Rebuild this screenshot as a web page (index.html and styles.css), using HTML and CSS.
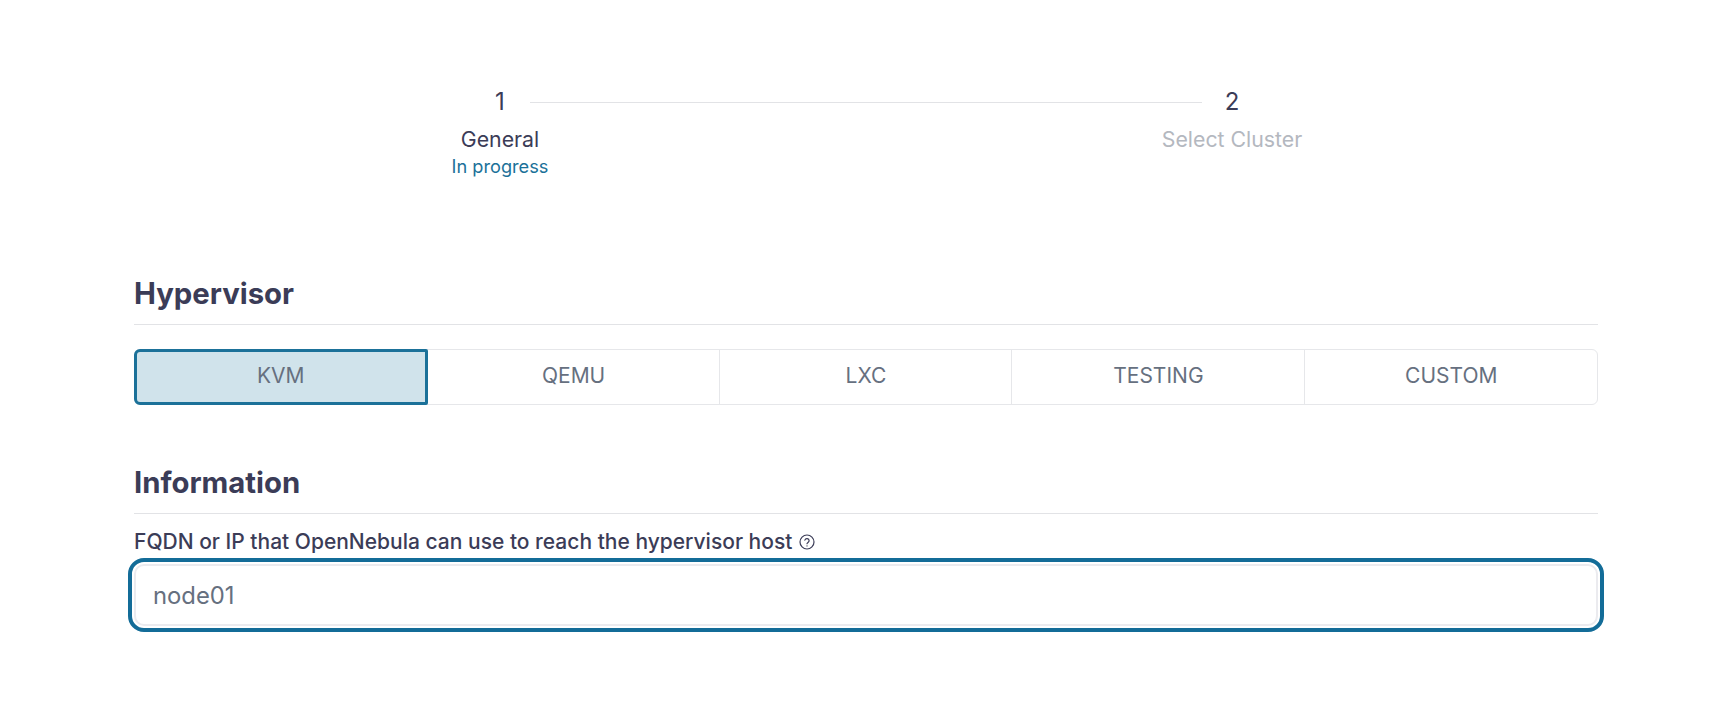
FILE: index.html
```html
<!DOCTYPE html>
<html lang="en">
<head>
  <meta charset="UTF-8" />
  <meta name="viewport" content="width=device-width, initial-scale=1.0" />
  <title>Create Host</title>
  <link rel="stylesheet" href="styles.css">
</head>
<body>
  <div class="wizard">
    <div class="stepper">
      <div class="step">
        <div class="step-number">1</div>
        <div class="step-label">General</div>
        <div class="step-status">In progress</div>
      </div>
      <div class="step step-next">
        <div class="step-connector"></div>
        <div class="step-number">2</div>
        <div class="step-label">Select Cluster</div>
      </div>
    </div>

    <div class="section section-hypervisor">
      <h2 class="section-title">Hypervisor</h2>
      <div class="tabs">
        <button class="tab tab-active">KVM</button>
        <button class="tab">QEMU</button>
        <button class="tab">LXC</button>
        <button class="tab">TESTING</button>
        <button class="tab">CUSTOM</button>
      </div>
    </div>

    <div class="section section-information">
      <h2 class="section-title">Information</h2>
      <label class="field-label" for="hostname">
        FQDN or IP that OpenNebula can use to reach the hypervisor host
        <svg class="help-icon" viewBox="0 0 24 24" fill="none" stroke="currentColor" stroke-width="1.8" stroke-linecap="round" stroke-linejoin="round">
          <circle cx="12" cy="12" r="10.5" />
          <path d="M8.8 9.2a3.3 3.3 0 0 1 6.4 1c0 2.2-3.2 2.6-3.2 4.4" />
          <path d="M12 17.8v.1" />
        </svg>
      </label>
      <div class="field-focus">
        <input id="hostname" class="field-input" type="text" value="node01" />
      </div>
    </div>
  </div>
</body>
</html>
```

FILE: styles.css
```css
body {
  margin: 0;
  font-family: Inter, "Liberation Sans", sans-serif;
  background-color: #fff;
  color: #3b3c57;
}

.wizard {
  width: 1464px;
  margin-left: 134px;
  padding-top: 85px;
}

.stepper {
  display: grid;
  grid-template-columns: 1fr 1fr;
  text-align: center;
}

.step {
  position: relative;
}

.step-connector {
  position: absolute;
  top: 17px;
  left: calc(-50% + 30px);
  right: calc(50% + 30px);
  border-top: 1px solid #e2e3e6;
}

.step-number {
  font-size: 24px;
  line-height: 33px;
}

.step-label {
  margin-top: 7px;
  font-size: 21.3px;
  line-height: 28px;
}

.step-next .step-label {
  color: #b4b8bf;
}

.step-status {
  margin-top: 1px;
  font-size: 18.2px;
  line-height: 24px;
  color: #1b7199;
}

.section-hypervisor {
  margin-top: 94px;
}

.section-information {
  margin-top: 56px;
}

.section-title {
  margin: 0;
  padding-bottom: 9px;
  border-bottom: 1px solid #e2e3e6;
  font-size: 29.3px;
  line-height: 43px;
  font-weight: 700;
}

.tabs {
  display: grid;
  grid-template-columns: repeat(5, 1fr);
  margin-top: 24px;
  height: 56px;
  border: 1px solid #e6e7ea;
  border-radius: 6px;
  box-sizing: border-box;
}

.tab {
  padding: 0 0 3px 1px;
  font: inherit;
  font-size: 21px;
  color: #66707f;
  background: none;
  border: none;
  border-right: 1px solid #e6e7ea;
}

.tab:last-child {
  border-right: none;
}

.tab-active {
  margin: -1px;
  padding: 0 1px 4px 0;
  background-color: #d0e3eb;
  border: 3px solid #1b7199;
  border-radius: 6px 2px 2px 6px;
}

.field-label {
  display: flex;
  align-items: center;
  margin-top: 14px;
  font-size: 21px;
  line-height: 28px;
  font-weight: 500;
}

.help-icon {
  width: 16px;
  height: 16px;
  margin-left: 7px;
}

.field-focus {
  margin: 2px -6px 0;
  padding: 2px;
  border: 4px solid #136c98;
  border-radius: 16px;
}

.field-input {
  display: block;
  box-sizing: border-box;
  width: 100%;
  height: 62px;
  padding: 0 17px;
  font: inherit;
  font-size: 23.8px;
  color: #66707f;
  background: #fff;
  border: 2px solid #ebebef;
  border-radius: 10px;
  outline: none;
}
```
